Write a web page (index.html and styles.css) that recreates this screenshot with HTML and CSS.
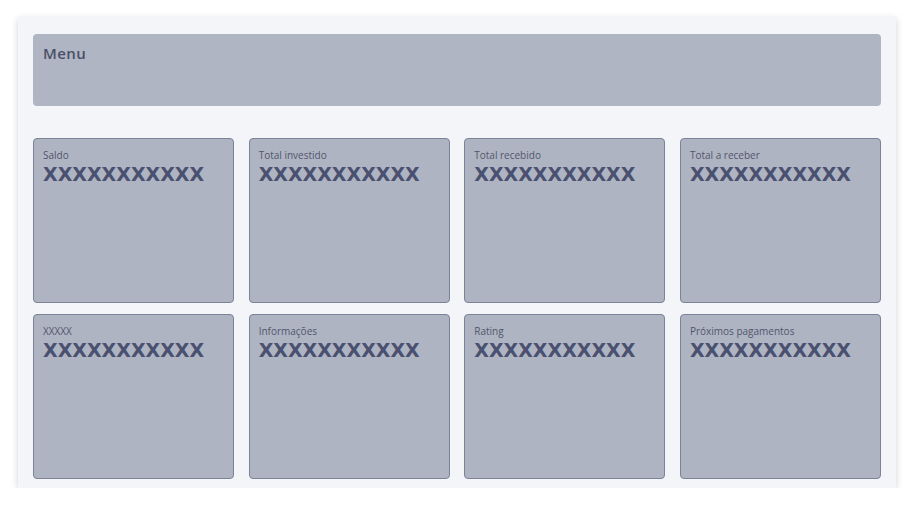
FILE: index.html
```html
<!DOCTYPE html>
<html lang="pt">
<head>
<meta charset="utf-8">
<title>Dashboard</title>
<link rel="stylesheet" href="styles.css">
</head>
<body>
<div class="panel">
  <div class="menu">Menu</div>
  <div class="grid">
    <div class="card"><div class="label">Saldo</div><div class="value">XXXXXXXXXXX</div></div>
    <div class="card"><div class="label">Total investido</div><div class="value">XXXXXXXXXXX</div></div>
    <div class="card"><div class="label">Total recebido</div><div class="value">XXXXXXXXXXX</div></div>
    <div class="card"><div class="label">Total a receber</div><div class="value">XXXXXXXXXXX</div></div>
    <div class="card"><div class="label">XXXXX</div><div class="value">XXXXXXXXXXX</div></div>
    <div class="card"><div class="label">Informações</div><div class="value">XXXXXXXXXXX</div></div>
    <div class="card"><div class="label">Rating</div><div class="value">XXXXXXXXXXX</div></div>
    <div class="card"><div class="label">Próximos pagamentos</div><div class="value">XXXXXXXXXXX</div></div>
  </div>
</div>
</body>
</html>
```
FILE: styles.css
```css
html, body {
  margin: 0;
  padding: 0;
  background: #ffffff;
}
body {
  padding: 17px 18px 0 18px;
  font-family: "Open Sans", "Liberation Sans", sans-serif;
}
.panel {
  width: 878px;
  height: 471px;
  box-sizing: border-box;
  background: #f4f5f9;
  padding: 17px 15px 9px 15px;
  box-shadow: 0 2px 7px rgba(0, 0, 0, 0.18);
  display: flex;
  flex-direction: column;
}
.menu {
  height: 72px;
  box-sizing: border-box;
  background: #b0b5c3;
  border-radius: 4px;
  padding: 9px 10px;
  font-family: "Open Sans", sans-serif;
  font-weight: 600;
  font-size: 15px;
  line-height: 20px;
  color: #4a4f68;
  letter-spacing: 0.4px;
}
.grid {
  margin-top: 32px;
  flex: 1;
  display: grid;
  grid-template-columns: repeat(4, 1fr);
  grid-template-rows: 165px 165px;
  column-gap: 14.5px;
  row-gap: 11px;
}
.card {
  background: #afb4c2;
  border: 1px solid #7c8297;
  border-radius: 4px;
  padding: 10px 9px;
}
.label {
  font-size: 10px;
  line-height: 13px;
  color: #50566d;
}
.value {
  font-family: "DejaVu Sans", sans-serif;
  font-weight: 700;
  font-size: 19px;
  line-height: 22px;
  color: #4a5170;
  margin-top: 1px;
}
```
